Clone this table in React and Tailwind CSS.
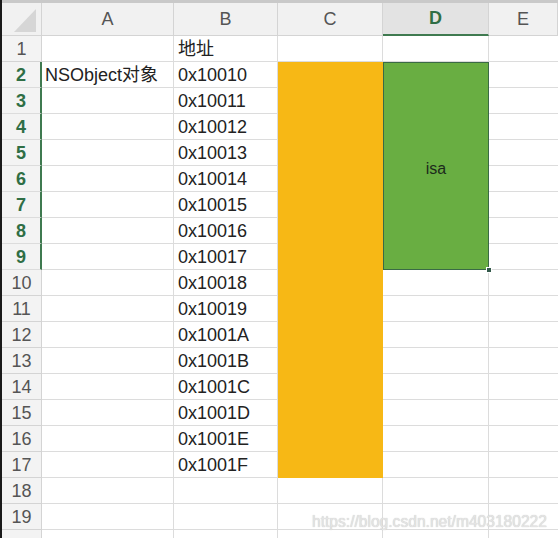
import React from "react";

const cols = ["A", "B", "C", "D", "E"];
const addrs = [
  "0x10010", "0x10011", "0x10012", "0x10013", "0x10014", "0x10015", "0x10016", "0x10017",
  "0x10018", "0x10019", "0x1001A", "0x1001B", "0x1001C", "0x1001D", "0x1001E", "0x1001F",
];

export default function App() {
  const cells = [];

  // header row
  cells.push(
    <div key="corner" className="relative bg-[#f1f1f1] border-r border-b border-[#d4d4d4]">
      <svg className="absolute inset-0" width="42" height="33">
        <polygon points="12,29 34,29 34,6" fill="#d6d6d6" />
      </svg>
    </div>
  );
  cols.forEach((c) => {
    const active = c === "D";
    cells.push(
      <div
        key={"h" + c}
        className={
          active
            ? "flex items-center justify-center bg-[#e3e3e3] border-r border-[#d4d4d4] border-b-2 border-b-[#3f7a50] text-[#2f6e45] font-bold text-[18px]"
            : "flex items-center justify-center bg-[#f1f1f1] border-r border-b border-[#d4d4d4] text-[#555] text-[18px]"
        }
      >
        {c}
      </div>
    );
  });

  for (let r = 1; r <= 20; r++) {
    const sel = r >= 2 && r <= 9;
    cells.push(
      <div
        key={"r" + r}
        className={
          sel
            ? "flex items-center justify-center pt-[2px] bg-[#f3f3f3] border-b border-[#dcdcdc] border-r-2 border-r-[#3f7a50] text-[#2f6e45] font-bold text-[18px]"
            : "flex items-center justify-center pt-[2px] bg-[#f3f3f3] border-b border-r border-[#d4d4d4] text-[#555] text-[18px]"
        }
      >
        {r < 20 ? r : ""}
      </div>
    );
    cells.push(
      <div key={"a" + r} className="flex items-center pt-[2px] pl-[3px] border-r border-b border-[#dcdcdc] text-[#222] text-[18px] whitespace-nowrap">
        {r === 2 ? "NSObject对象" : ""}
      </div>
    );
    cells.push(
      <div key={"b" + r} className="flex items-center pt-[2px] pl-[4px] border-r border-b border-[#dcdcdc] text-[#222] text-[18px] whitespace-nowrap">
        {r === 1 ? "地址" : r >= 2 && r <= 17 ? addrs[r - 2] : ""}
      </div>
    );
    if (!(r >= 2 && r <= 17)) {
      cells.push(<div key={"c" + r} className="border-r border-b border-[#dcdcdc]" />);
    }
    if (!sel) {
      cells.push(<div key={"d" + r} className="border-r border-b border-[#dcdcdc]" />);
    }
    cells.push(<div key={"e" + r} className="border-b border-[#dcdcdc]" />);
  }

  return (
    <div
      className="relative w-[558px] h-[538px] overflow-hidden bg-white border-l-2 border-[#1a1a1a]"
      style={{ fontFamily: '"Liberation Sans", "Noto Sans CJK SC", sans-serif' }}
    >
      <div className="h-[3px] bg-[#c9c9c9]" />
      <div className="grid grid-cols-[40px_132px_104px_105px_106px_1fr] grid-rows-[33px_repeat(20,26px)]">
        <div className="col-start-4 row-start-3 row-span-16 bg-[#f7b815] border-b border-[#f7b815]" />
        <div className="relative col-start-5 row-start-3 row-span-8 flex items-center justify-center pt-[6px] bg-[#69ae42] border border-[#3a6a45] text-[#1c2a1c] text-[16px]">
          isa
          <div className="absolute -right-[4px] -bottom-[4px] w-[6px] h-[6px] bg-[#33594a] border border-white" />
        </div>
        {cells}
      </div>
      <div className="absolute left-[310px] top-[510px] text-[15.6px] text-[#e4e4e4] [text-shadow:0_0_1px_#bdbdbd] whitespace-nowrap">
        https://blog.csdn.net/m403180222
      </div>
    </div>
  );
}
